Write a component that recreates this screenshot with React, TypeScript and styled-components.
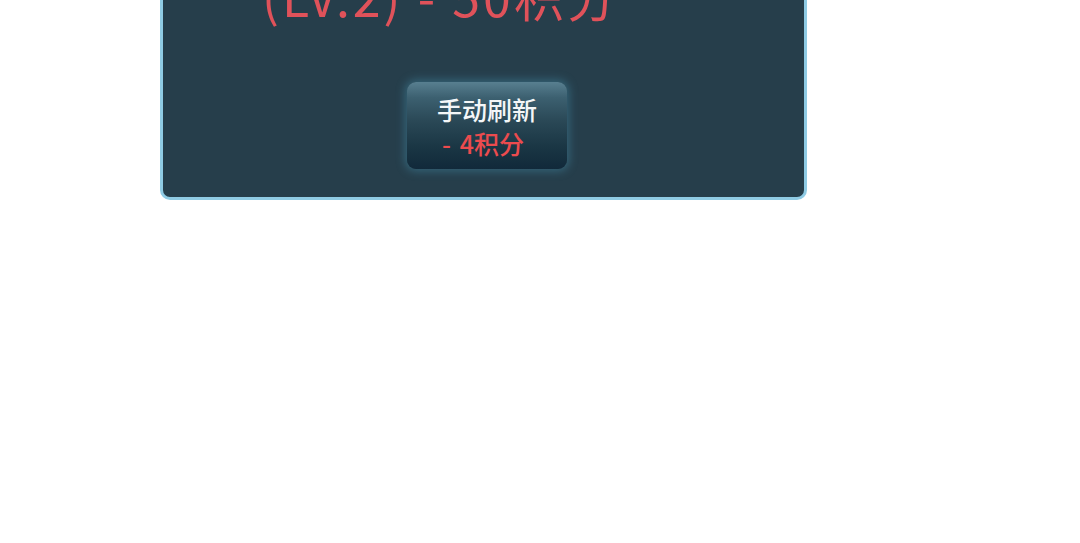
import React from 'react';
import styled, { createGlobalStyle } from 'styled-components';

const Global = createGlobalStyle`
  html, body {
    margin: 0;
    background: #ffffff;
    font-family: "Noto Sans CJK SC", "Noto Sans", sans-serif;
  }
`;

const Page = styled.div`
  padding-left: 160px;
  overflow: hidden;
  height: 543px;
`;

const Card = styled.div`
  width: 647px;
  box-sizing: border-box;
  margin-top: -38px;
  border: 3px solid #8fcbe4;
  border-radius: 10px;
  background: #263e4b;
  display: flex;
  flex-direction: column;
  padding-bottom: 28px;
`;

const Cost = styled.div`
  margin-left: 99px;
  font-size: 50px;
  line-height: 60px;
  color: #e0525a;
  letter-spacing: 3px;
  white-space: nowrap;
`;

const RefreshButton = styled.button`
  margin: 57px 0 0 244px;
  width: 160px;
  height: 87px;
  border: none;
  border-radius: 9px;
  background: linear-gradient(
    to bottom,
    #587f90 0%,
    #3c6070 18%,
    #2a4856 45%,
    #1a3644 75%,
    #11293a 100%
  );
  box-shadow: 0 0 10px 2px rgba(70, 150, 180, 0.45);
  display: flex;
  flex-direction: column;
  align-items: center;
  justify-content: center;
  font-family: "Noto Sans CJK SC", "Noto Sans", sans-serif;
  cursor: pointer;
  padding: 0;
`;

const Label = styled.span<{ $tone: 'white' | 'red' }>`
  font-size: 25px;
  line-height: 34px;
  font-weight: 500;
  color: ${p => (p.$tone === 'red' ? '#ec4b4e' : '#f4f7f8')};
  margin-right: ${p => (p.$tone === 'red' ? '8px' : '0')};
  word-spacing: ${p => (p.$tone === 'red' ? '3px' : '0')};
`;

export default function App() {
  return (
    <>
      <Global />
      <Page>
        <Card>
          <Cost>(LV.2) - 50积分</Cost>
          <RefreshButton>
            <Label $tone="white">手动刷新</Label>
            <Label $tone="red">- 4积分</Label>
          </RefreshButton>
        </Card>
      </Page>
    </>
  );
}
